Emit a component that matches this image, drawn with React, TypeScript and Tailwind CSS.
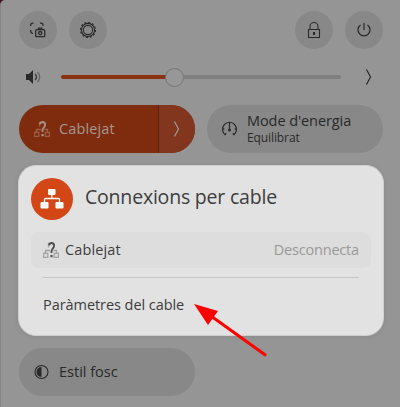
import type { ReactNode } from "react";

function Round({ children }: { children: ReactNode }) {
  return <button className="flex size-[38px] items-center justify-center rounded-full bg-[#888888]">{children}</button>;
}

function Chevron({ className }: { className: string }) {
  return (
    <svg className={className} width="8" height="18" viewBox="0 0 8 18" fill="none" stroke="currentColor" strokeWidth="1.2">
      <path d="M1.500 1.500 L5.500 9 L1.500 16.500" />
    </svg>
  );
}

function UnknownNetwork({ box, mark }: { box: string; mark: string }) {
  return (
    <svg width="16" height="16" viewBox="0 0 16 16" fill="none">
      <g stroke={box} strokeWidth="1.300">
        <path d="M.6 11.400h4.200v4H.6zM11.200 11.400h4.200v4h-4.200zM2.500 11V8.500h4.500M13.500 11V8.500h-3M5.500 5.500V1.500h2" />
      </g>
      <path d="M6 3.200C6.500 1.500 7.300 1 8.500 1c1.700 0 2.600 1 2.600 2.700 0 2.600-2.600 3.100-2.600 5.500v1.900" stroke={mark} strokeWidth="1.900" />
      <rect x="7.400" y="13" width="2.200" height="2.200" fill={mark} />
    </svg>
  );
}

export default function App() {
  return (
    <div className="relative h-[407px] w-[400px] overflow-hidden bg-[#430c22] font-['Open_Sans','Noto_Sans',sans-serif] text-[#292929]">
      <div className="flex h-full flex-col rounded-tl-[5px] border-l border-[#858585] bg-[#959595] pt-[11px] pl-[18px]">
        <header className="flex w-[364px] gap-3">
          <Round>
            <svg width="18" height="18" viewBox="0 0 18 18" fill="none" stroke="currentColor" strokeWidth="1.300">
              <path d="M1.700 5V4q0-1.800 1.800-1.800h1M11 2.200h1.200Q14 2.200 14 4v1M1.700 9v1.500q0 1.800 1.800 1.800H4" />
              <rect x="6.700" y="8.700" width="9" height="7" rx="1" />
              <path d="M9.500 8.500V7.200h3.300v1.300" />
              <circle cx="11.200" cy="12.100" r="1.600" />
            </svg>
          </Round>
          <Round>
            <svg width="18" height="18" viewBox="0 0 18 18" fill="none" stroke="currentColor">
              <circle cx="9" cy="9" r="6.600" strokeWidth="1.100" />
              <circle cx="9" cy="9" r="4.600" strokeWidth="1.100" />
              <circle cx="9" cy="9" r="7.500" strokeWidth="1.200" strokeDasharray="2 1.927" />
            </svg>
          </Round>
          <div className="flex-1" />
          <Round>
            <svg width="16" height="18" viewBox="0 0 16 18" fill="none" stroke="currentColor" strokeWidth="1.100">
              <path d="M2.500 8.500h11v8h-11zM4 8V5.500a4 4 0 0 1 8 0V8" />
              <rect x="7" y="11" width="2" height="3" fill="currentColor" stroke="none" />
            </svg>
          </Round>
          <Round>
            <svg width="16" height="16" viewBox="0 0 16 16" fill="none" stroke="currentColor" strokeWidth="1.200">
              <path d="M8 1v7M4.500 3a6 6 0 1 0 7 0" />
            </svg>
          </Round>
        </header>

        <div className="mt-[18px] flex h-5 w-[364px] items-center">
          <svg className="ml-[7px]" width="16" height="16" viewBox="0 0 16 16" fill="none">
            <path d="M0 5h3l4-4v14l-4-4H0z" fill="#292929" />
            <path d="M9 5q3 3 0 6" stroke="#333" strokeWidth="1.200" />
            <path d="M11.500 3q4.500 5 0 10" stroke="#626262" strokeWidth="1.200" />
          </svg>
          <div className="ml-[19px] flex h-[19px] w-[280px] items-center">
            <div className="h-1 w-[105px] rounded-l-full bg-[#8b3212]" />
            <div className="-ml-px size-[19px] rounded-full border border-[#757575] bg-[#979797]" />
            <div className="h-1 flex-1 rounded-r-full bg-[#7f7f7f]" />
          </div>
          <Chevron className="ml-6" />
        </div>

        <div className="mt-[18px] flex h-12 gap-3">
          <div className="flex w-[176px] overflow-hidden rounded-full bg-[#7f2b0e] text-[#a29995]">
            <div className="flex flex-1 items-center pl-[15px]">
              <UnknownNetwork box="#9d5d48" mark="#a69087" />
              <span className="ml-[9px] text-[14.5px] leading-5 tracking-[0.12px]">Cablejat</span>
            </div>
            <div className="flex w-[37px] items-center justify-center border-l border-[#56230f] bg-[#82361e]">
              <Chevron className="" />
            </div>
          </div>
          <div className="flex w-[176px] items-center rounded-full bg-[#888888] pl-[14px]">
            <svg width="17" height="16" viewBox="0 0 17 16" fill="none" stroke="currentColor" strokeWidth="1.200">
              <path d="M4.500 14A7 7 0 1 1 12.500 14M8.500 1.500V8" />
              <path d="M1.500 8h2M13.500 8h2M4 14l1-2M13 14l-1-2" />
              <circle cx="8.500" cy="9" r="1.500" fill="currentColor" stroke="none" />
            </svg>
            <div className="ml-[9px] whitespace-nowrap">
              <div className="text-[14.5px] leading-[18px] tracking-[-0.080px]">Mode d'energia</div>
              <div className="text-[12px] leading-[16px] tracking-[-0.100px]">Equilibrat</div>
            </div>
          </div>
        </div>

        <div className="mt-[195px] flex h-12 w-[176px] items-center rounded-full bg-[#888888] pl-[15px]">
          <svg width="16" height="16" viewBox="0 0 16 16" fill="none">
            <circle cx="7.500" cy="8" r="6.500" stroke="#292929" strokeWidth="1.100" />
            <path d="M7.500 3a5 5 0 0 0 0 10z" fill="#292929" />
          </svg>
          <span className="ml-[9px] text-[14.5px]">Estil fosc</span>
        </div>
      </div>

      <section className="absolute top-[165px] left-[18px] flex h-[171px] w-[366px] flex-col rounded-[18px] border border-[#cfcfcf] bg-[#e2e2e2] px-3 pt-3 whitespace-nowrap text-[#3d3d3d] shadow-[0_1px_5px_rgba(0,0,0,0.08)]">
        <div className="flex h-[42px] gap-[12px]">
          <div className="flex size-[42px] items-center justify-center rounded-full bg-[#d34615]">
            <svg width="24" height="22" viewBox="0 0 24 22" fill="white">
              <rect x="8" y="1" width="7.500" height="6" rx="1" />
              <rect x=".5" y="14" width="8" height="6.500" rx="1" />
              <rect x="15.500" y="14" width="8" height="6.500" rx="1" />
              <path d="M11.800 6v4.500M4.500 14v-2.500q0-1 1-1h13q1 0 1 1V14" fill="none" stroke="white" strokeWidth="1.300" />
            </svg>
          </div>
          <h2 className="mt-1 text-[19.5px] leading-[30px] font-normal tracking-[-0.200px]">Connexions per cable</h2>
        </div>
        <div className="mt-3 flex h-9 items-center rounded-lg bg-[#dddddd] px-3">
          <UnknownNetwork box="#a2a2a2" mark="#505050" />
          <span className="ml-[6px] text-[14.5px] tracking-[0.120px]">Cablejat</span>
          <span className="ml-auto text-[14.5px] tracking-[-0.180px] text-[#999999]">Desconnecta</span>
        </div>
        <div className="mx-3 mt-[9px] h-px bg-[#c4c4c4]" />
        <div className="mt-[17px] ml-3 text-[14.5px] leading-5 tracking-[-0.060px]">Paràmetres del cable</div>
      </section>

      <svg className="absolute top-[300px] left-[190px]" width="80" height="60" viewBox="190 300 80 60">
        <path d="M266 355.500L211 316" stroke="#ff0000" strokeWidth="3" />
        <path d="M194 304l24 7-10 14z" fill="#ff0000" />
      </svg>
    </div>
  );
}
